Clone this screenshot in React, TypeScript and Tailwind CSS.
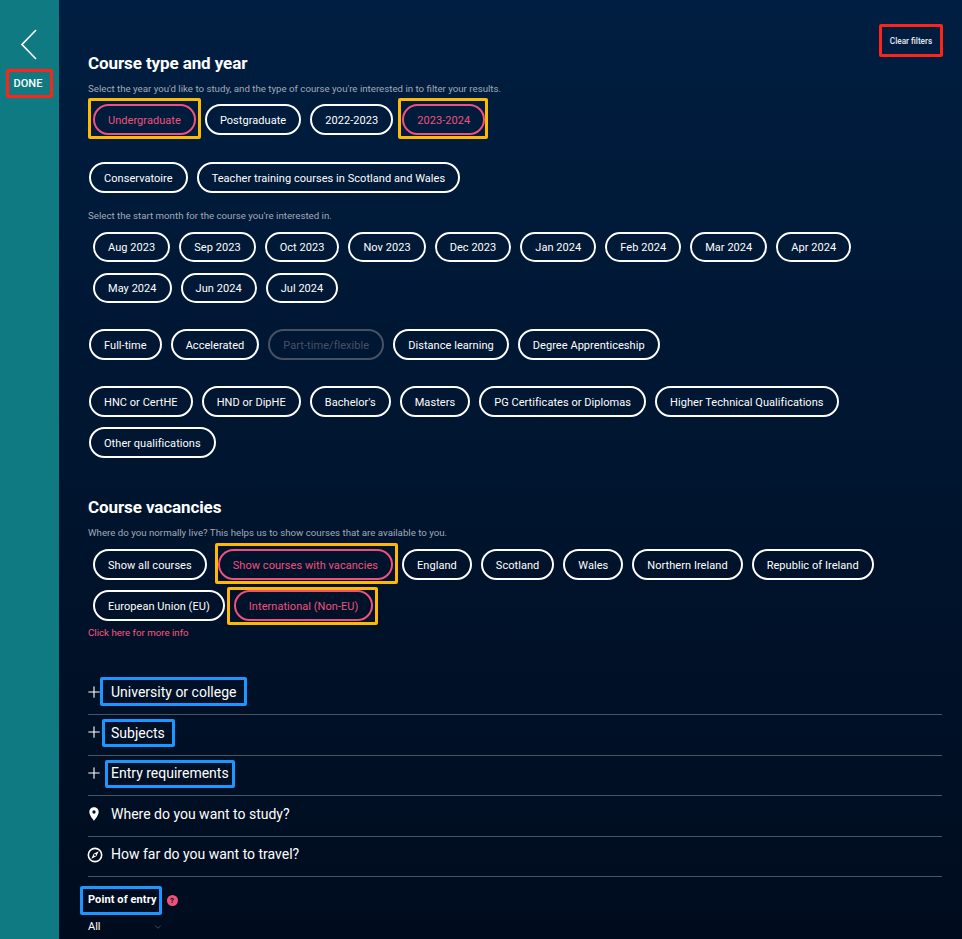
import { Plus, ChevronDown } from "lucide-react";
import type { ReactNode } from "react";

type PillProps = { label: string; active?: boolean; disabled?: boolean; box?: string; className?: string };

function Pill({ label, active, disabled, box, className }: PillProps) {
  const tone = active
    ? "border-[#f0517a] text-[#f0517a]"
    : disabled
      ? "border-[#465264] text-[#465264]"
      : "border-white text-white";
  return (
    <div className={`relative ${className ?? ""}`}>
      <div className={`h-[30.5px] flex items-center rounded-full border-2 px-[13px] pt-[3px] text-[11px] tracking-[0.05px] font-normal whitespace-nowrap ${tone}`}>
        {label}
      </div>
      {box && <div className={`absolute border-[3px] border-[#ffb900] rounded-[2px] ${box}`} />}
    </div>
  );
}

function PillGroup({ children, className }: { children: ReactNode; className?: string }) {
  return <div className={`flex flex-wrap gap-x-[9px] gap-y-[10.5px] ${className ?? ""}`}>{children}</div>;
}

function Row({ icon, label, box }: { icon: ReactNode; label: string; box?: string }) {
  return (
    <div className="relative h-[40.5px] flex items-center pb-[3.5px] border-b border-[#4a5360]">
      <div className="w-[23px] flex items-center text-white">{icon}</div>
      <div className="text-[14px] text-white">{label}</div>
      {box && <div className={`absolute border-[3px] border-[#1e96ff] rounded-[2px] ${box}`} />}
    </div>
  );
}

export default function App() {
  const plus = <Plus size={18} strokeWidth={1.5} className="-ml-[3px] -mt-[2px] shrink-0" />;
  return (
    <div className="flex h-[939px] w-[962px] overflow-hidden font-['Roboto',sans-serif]">
      <aside className="w-[59px] shrink-0 bg-[#107a83] flex flex-col items-center pt-[29px]">
        <svg width="20" height="32" viewBox="0 0 20 32" className="-ml-[1px]">
          <path d="M17 1 L3 15.5 L17 30" fill="none" stroke="white" strokeWidth="1.7" />
        </svg>
        <div className="relative -ml-[3px] mt-[8px] pt-[2px] text-[11px] font-medium text-white h-[29px] flex items-center">
          DONE
          <div className="absolute -left-[8px] -right-[11px] inset-y-0 border-[3px] border-[#ff2318] rounded-[2px]" />
        </div>
      </aside>
      <main className="flex-1 bg-gradient-to-b from-[#001e41] to-[#000c1e] pl-[29px] pr-[20px] relative">
        <div className="absolute top-[24px] right-[19px] w-[64px] h-[33px] pt-[1px] border-[3px] border-[#ff2318] rounded-[2px] flex items-center justify-center text-[8.2px] font-medium text-[#e6eaf0]">
          Clear filters
        </div>
        <h2 className="mt-[52px] text-[17px] leading-[22px] font-bold text-white tracking-[-0.1px]">Course type and year</h2>
        <p className="mt-[8px] text-[9.7px] leading-[13px] text-[#a0aab8]">
          Select the year you'd like to study, and the type of course you're interested in to filter your results.
        </p>
        <PillGroup className="mt-[9px] pl-[5px]">
          <Pill label="Undergraduate" active box="-left-[5px] -right-[5px] -top-[6px] -bottom-[4px]" />
          <Pill label="Postgraduate" />
          <Pill label="2022-2023" />
          <Pill label="2023-2024" active box="-left-[4px] -right-[3px] -top-[6px] -bottom-[4px]" />
        </PillGroup>
        <PillGroup className="mt-[27.5px] pl-[1px]">
          <Pill label="Conservatoire" />
          <Pill label="Teacher training courses in Scotland and Wales" />
        </PillGroup>
        <p className="mt-[16px] text-[9.7px] leading-[13px] text-[#a0aab8]">
          Select the start month for the course you're interested in.
        </p>
        <PillGroup className="mt-[10px] pl-[5px] pr-[80px]">
          {["Aug 2023", "Sep 2023", "Oct 2023", "Nov 2023", "Dec 2023", "Jan 2024", "Feb 2024", "Mar 2024", "Apr 2024", "May 2024", "Jun 2024", "Jul 2024"].map((m) => (
            <Pill key={m} label={m} />
          ))}
        </PillGroup>
        <PillGroup className="mt-[26px] pl-[1px]">
          <Pill label="Full-time" />
          <Pill label="Accelerated" />
          <Pill label="Part-time/flexible" disabled />
          <Pill label="Distance learning" />
          <Pill label="Degree Apprenticeship" />
        </PillGroup>
        <PillGroup className="mt-[26.5px] pl-[1px]">
          {["HNC or CertHE", "HND or DipHE", "Bachelor's", "Masters", "PG Certificates or Diplomas", "Higher Technical Qualifications", "Other qualifications"].map((q) => (
            <Pill key={q} label={q} />
          ))}
        </PillGroup>
        <h2 className="mt-[38px] text-[17px] leading-[22px] font-bold text-white tracking-[-0.1px]">Course vacancies</h2>
        <p className="mt-[8px] text-[9.7px] leading-[13px] text-[#a0aab8]">
          Where do you normally live? This helps us to show courses that are available to you.
        </p>
        <PillGroup className="mt-[10.5px] pl-[5px]">
          <Pill label="Show all courses" />
          <Pill className="ml-[2px]" label="Show courses with vacancies" active box="-left-[3px] -right-[5px] -top-[6px] -bottom-[4px]" />
          <Pill label="England" />
          <Pill label="Scotland" />
          <Pill label="Wales" />
          <Pill label="Northern Ireland" />
          <Pill label="Republic of Ireland" />
          <Pill label="European Union (EU)" />
          <Pill label="International (Non-EU)" active box="-left-[7px] -right-[5px] -top-[3px] -bottom-[4px]" />
        </PillGroup>
        <p className="mt-[5.5px] text-[9.7px] leading-[13px] text-[#f9567f]">Click here for more info</p>
        <div className="mt-[35.5px]">
          <Row icon={plus} label="University or college" box="left-[12px] w-[147px] top-[2px] h-[29px]" />
          <Row icon={plus} label="Subjects" box="left-[14px] w-[73px] top-[4px] h-[28px]" />
          <Row icon={plus} label="Entry requirements" box="left-[17px] w-[130px] top-[4px] h-[28px]" />
          <Row
            icon={
              <svg width="16" height="16" viewBox="0 0 24 24" fill="white" className="-ml-[2px]">
                <path d="M12 2C8.13 2 5 5.13 5 9c0 5.25 7 13 7 13s7-7.75 7-13c0-3.87-3.13-7-7-7zm0 9.5a2.5 2.5 0 010-5 2.5 2.5 0 010 5z" />
              </svg>
            }
            label="Where do you want to study?"
          />
          <Row
            icon={
              <svg width="16" height="16" viewBox="0 0 24 24" className="-ml-[1px]">
                <circle cx="12" cy="12" r="10" fill="none" stroke="white" strokeWidth="2.4" />
                <path d="M17.5 6.5 L14 14 L6.5 17.5 L10 10 Z" fill="white" />
                <circle cx="12" cy="12" r="1.5" fill="#000f24" />
              </svg>
            }
            label="How far do you want to travel?"
          />
        </div>
        <div className="relative mt-[15px] flex items-center h-[17px]">
          <span className="text-[11px] tracking-[0.1px] font-bold text-white">Point of entry</span>
          <div className="absolute -left-[8px] w-[82px] -top-[6px] h-[29px] border-[3px] border-[#1e96ff] rounded-[2px]" />
          <span className="ml-[10px] w-[11px] h-[11px] rounded-full bg-[#f0517a] flex items-center justify-center text-[8px] font-bold text-[#001020]">?</span>
        </div>
        <div className="mt-[10px] flex items-center text-[11px] text-white">
          <span className="w-[65px] font-normal">All</span>
          <ChevronDown size={10} className="text-[#4a5360]" />
        </div>
      </main>
    </div>
  );
}
